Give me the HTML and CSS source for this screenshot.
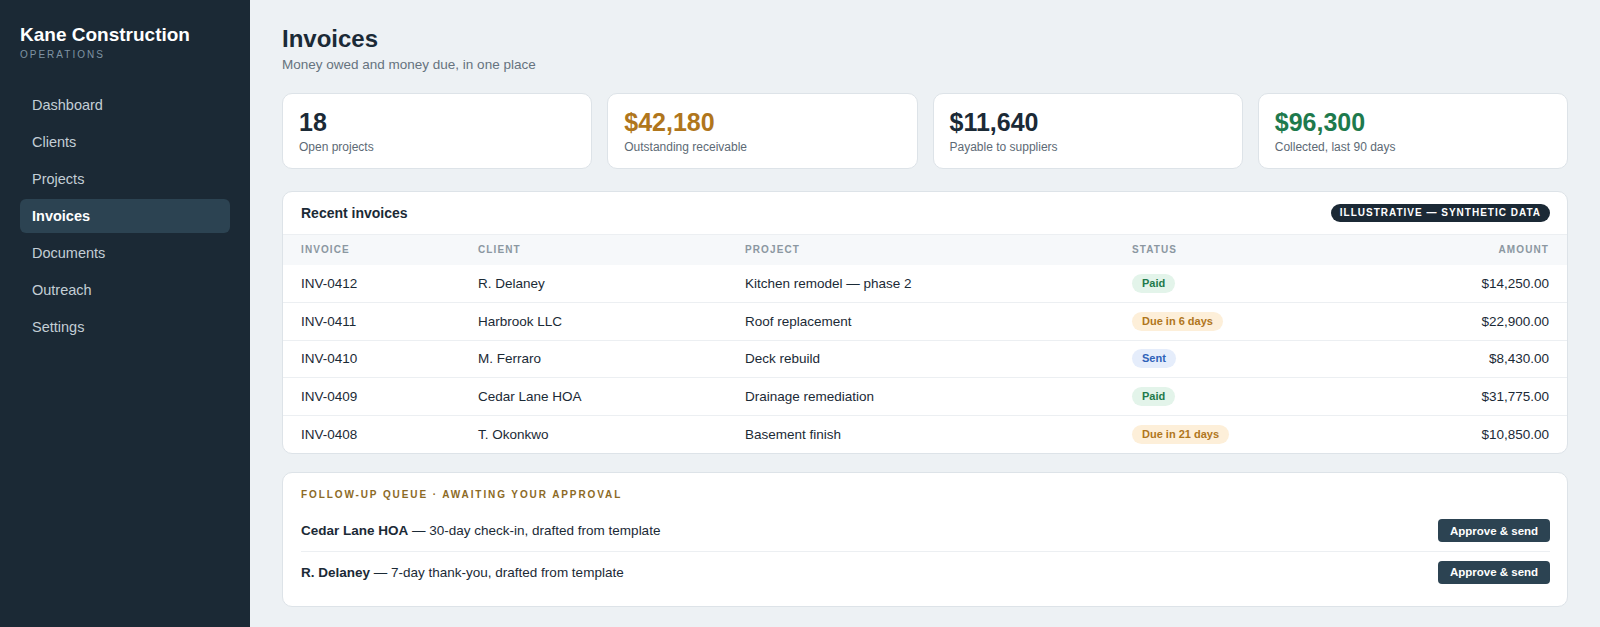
FILE: index.html
```html
<!DOCTYPE html>
<html lang="en">
<head>
<meta charset="utf-8">
<title>Invoices — Kane Construction</title>
<link rel="stylesheet" href="styles.css">
</head>
<body>
<div class="app">
  <aside class="sidebar">
    <div class="brand">
      <div class="brand-name">Kane Construction</div>
      <div class="brand-sub">OPERATIONS</div>
    </div>
    <nav class="nav">
      <a class="nav-item">Dashboard</a>
      <a class="nav-item">Clients</a>
      <a class="nav-item">Projects</a>
      <a class="nav-item active">Invoices</a>
      <a class="nav-item">Documents</a>
      <a class="nav-item">Outreach</a>
      <a class="nav-item">Settings</a>
    </nav>
  </aside>
  <main class="main">
    <header class="page-head">
      <h1 class="title">Invoices</h1>
      <p class="subtitle">Money owed and money due, in one place</p>
    </header>
    <section class="stats">
      <div class="stat"><div class="stat-num">18</div><div class="stat-label">Open projects</div></div>
      <div class="stat"><div class="stat-num orange">$42,180</div><div class="stat-label">Outstanding receivable</div></div>
      <div class="stat"><div class="stat-num">$11,640</div><div class="stat-label">Payable to suppliers</div></div>
      <div class="stat"><div class="stat-num green">$96,300</div><div class="stat-label">Collected, last 90 days</div></div>
    </section>
    <section class="card table-card">
      <div class="card-head">
        <h2 class="card-title">Recent invoices</h2>
        <span class="tag">ILLUSTRATIVE — SYNTHETIC DATA</span>
      </div>
      <table class="tbl">
        <thead>
          <tr><th class="c-inv">INVOICE</th><th class="c-cli">CLIENT</th><th class="c-proj">PROJECT</th><th class="c-stat">STATUS</th><th class="c-amt">AMOUNT</th></tr>
        </thead>
        <tbody>
          <tr><td>INV-0412</td><td>R. Delaney</td><td>Kitchen remodel — phase 2</td><td><span class="pill paid">Paid</span></td><td class="c-amt">$14,250.00</td></tr>
          <tr><td>INV-0411</td><td>Harbrook LLC</td><td>Roof replacement</td><td><span class="pill due">Due in 6 days</span></td><td class="c-amt">$22,900.00</td></tr>
          <tr><td>INV-0410</td><td>M. Ferraro</td><td>Deck rebuild</td><td><span class="pill sent">Sent</span></td><td class="c-amt">$8,430.00</td></tr>
          <tr><td>INV-0409</td><td>Cedar Lane HOA</td><td>Drainage remediation</td><td><span class="pill paid">Paid</span></td><td class="c-amt">$31,775.00</td></tr>
          <tr><td>INV-0408</td><td>T. Okonkwo</td><td>Basement finish</td><td><span class="pill due">Due in 21 days</span></td><td class="c-amt">$10,850.00</td></tr>
        </tbody>
      </table>
    </section>
    <section class="card queue">
      <div class="queue-title">FOLLOW-UP QUEUE · AWAITING YOUR APPROVAL</div>
      <div class="queue-list">
        <div class="queue-row">
          <div class="queue-text"><strong>Cedar Lane HOA</strong> — 30-day check-in, drafted from template</div>
          <button class="btn">Approve &amp; send</button>
        </div>
        <div class="queue-row">
          <div class="queue-text"><strong>R. Delaney</strong> — 7-day thank-you, drafted from template</div>
          <button class="btn">Approve &amp; send</button>
        </div>
      </div>
    </section>
  </main>
</div>
</body>
</html>
```
FILE: styles.css
```css
* { box-sizing: border-box; }
html, body { margin: 0; padding: 0; }
body {
  font-family: "Liberation Sans", Arial, Helvetica, sans-serif;
  background: #edf1f4;
  color: #1b2a36;
}
.app { display: flex; min-height: 627px; }
.sidebar {
  width: 250px;
  flex: 0 0 250px;
  background: #1b2935;
  padding: 24px 20px;
}
.brand-name { color: #fff; font-size: 19px; font-weight: 700; line-height: 22px; }
.brand-sub { color: #7f93a3; font-size: 10px; letter-spacing: 2px; line-height: 14px; margin-top: 2px; }
.nav { display: flex; flex-direction: column; gap: 3px; margin-top: 26px; }
.nav-item {
  display: block;
  color: #c3ced6;
  font-size: 14.5px;
  line-height: 34px;
  padding: 0 12px;
  border-radius: 6px;
}
.nav-item.active { background: #2c4352; color: #fff; font-weight: 700; }

.main { flex: 1; min-width: 0; padding: 25px 32px 24px 32px; }
.title { margin: 0; font-size: 24px; line-height: 28px; font-weight: 700; color: #1b2a36; }
.subtitle { margin: 4px 0 0; font-size: 13.5px; line-height: 16px; color: #66737e; }

.stats { display: grid; grid-template-columns: repeat(4, 1fr); gap: 15px; margin-top: 20px; }
.stat {
  background: #fff;
  border: 1px solid #dde3e8;
  border-radius: 10px;
  padding: 14px 16px 13px;
  height: 76px;
}
.stat-num { font-size: 25px; font-weight: 700; line-height: 29px; color: #1b2a36; }
.stat-num.orange { color: #b0761c; }
.stat-num.green { color: #1e7a4d; }
.stat-label { font-size: 12px; line-height: 14px; color: #5d6a75; margin-top: 3px; }

.card { background: #fff; border: 1px solid #dde3e8; border-radius: 10px; }
.table-card { margin-top: 22px; overflow: hidden; }
.card-head {
  display: flex; justify-content: space-between; align-items: center;
  padding: 0 17px 0 18px; height: 42px;
}
.card-title { margin: 0; font-size: 14px; font-weight: 700; color: #1b2a36; }
.tag {
  background: #1b2935; color: #fff;
  font-size: 10px; font-weight: 700; letter-spacing: 1px;
  line-height: 18px; padding: 0 9px; border-radius: 9px;
}
.tbl { width: 100%; border-collapse: collapse; table-layout: fixed; }
.tbl th {
  background: #f6f8fa;
  font-size: 10px; font-weight: 700; letter-spacing: 1.1px; color: #8b97a1;
  text-align: left; height: 30px; padding: 0 18px;
  border-top: 1px solid #eceff2;
}
.tbl td {
  font-size: 13.5px; color: #1b2a36; height: 37.8px; padding: 0 18px;
  border-top: 1px solid #eceff2;
}
.tbl tbody tr:first-child td { border-top: none; }
.c-inv { width: 177px; }
.c-cli { width: 267px; }
.c-proj { width: 387px; }
.c-stat { width: 250px; }
.tbl .c-amt { text-align: right; }
.pill {
  display: inline-block; font-size: 11px; font-weight: 700;
  line-height: 19px; padding: 0 10px; border-radius: 10px;
}
.pill.paid { background: #e3f4ea; color: #1f7a4a; }
.pill.due { background: #fdefd9; color: #b0761c; }
.pill.sent { background: #e5edfb; color: #2f62b8; }

.queue { margin-top: 18px; padding: 15px 17px 14px 18px; }
.queue-title { font-size: 10px; font-weight: 700; letter-spacing: 1.9px; color: #8c6a26; line-height: 14px; }
.queue-list { margin-top: 8px; }
.queue-row {
  display: flex; justify-content: space-between; align-items: center;
  height: 41px;
}
.queue-row + .queue-row { border-top: 1px solid #eceff2; }
.queue-text { font-size: 13.5px; color: #1b2a36; }
.queue-text strong { font-weight: 700; }
.btn {
  font-family: inherit; font-size: 11.5px; font-weight: 700; color: #fff;
  background: #2c4352; border: none; border-radius: 4px;
  height: 23px; padding: 0; width: 112px;
}
```
